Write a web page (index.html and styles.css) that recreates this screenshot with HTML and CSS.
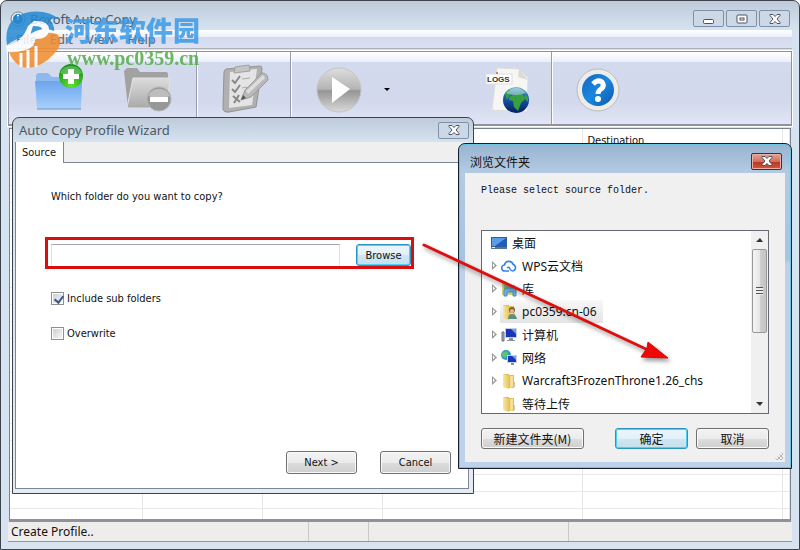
FILE: index.html
```html
<!DOCTYPE html>
<html lang="zh-CN">

<head>
    <meta charset="UTF-8">
    <meta name="viewport" content="width=device-width, initial-scale=1.0">
    <title>Boxoft Auto Copy</title>
    <link rel="stylesheet" href="styles.css">
</head>

<body>
    <svg width="0" height="0" class="defs" aria-hidden="true">
        <defs>
            <linearGradient id="blueFolder" x1="0" y1="0" x2="0" y2="1">
                <stop offset="0" stop-color="#6aa5ee" />
                <stop offset="1" stop-color="#a9d0fb" />
            </linearGradient>
            <linearGradient id="grayFolder" x1="0" y1="0" x2="0" y2="1">
                <stop offset="0" stop-color="#dcdcdc" />
                <stop offset="1" stop-color="#a9a9a9" />
            </linearGradient>
            <radialGradient id="greenBall" cx=".5" cy=".9" r=".9">
                <stop offset="0" stop-color="#5fe02f" />
                <stop offset="1" stop-color="#0b8f10" />
            </radialGradient>
            <linearGradient id="grayBall" x1="0" y1="0" x2="0" y2="1">
                <stop offset="0" stop-color="#dedede" />
                <stop offset=".48" stop-color="#b4b4b4" />
                <stop offset=".52" stop-color="#959595" />
                <stop offset="1" stop-color="#dadada" />
            </linearGradient>
            <linearGradient id="blueBall" x1="0" y1="0" x2="1" y2="1">
                <stop offset="0" stop-color="#1268bd" />
                <stop offset=".5" stop-color="#1b86e0" />
                <stop offset="1" stop-color="#0b57a8" />
            </linearGradient>
            <linearGradient id="globe" x1="0" y1="0" x2="0" y2="1">
                <stop offset="0" stop-color="#7cc0c8" />
                <stop offset=".35" stop-color="#1c5fb0" />
                <stop offset="1" stop-color="#04205f" />
            </linearGradient>
            <linearGradient id="yellowFolder" x1="0" y1="0" x2="1" y2="0">
                <stop offset="0" stop-color="#f9e9a6" />
                <stop offset="1" stop-color="#e6c55c" />
            </linearGradient>
            <symbol id="folder" viewBox="0 0 16 16">
                <path d="M2 1h6v13H2z" fill="#e2bf56" />
                <path d="M8 2h5v13H8z" fill="#dfbe5a" />
                <path d="M2 1l6 2v13l-6-2z" fill="url(#yellowFolder)" />
                <path d="M9 3h3v11l-3 1z" fill="#f5df92" />
                <path d="M13 9h1v5h-1z" fill="#c8c8b8" />
            </symbol>
            <symbol id="cross" viewBox="0 0 12 10">
                <path d="M1 .5h3l2 2 2-2h3v1L8 5l3 3.500v1H8l-2-2-2 2H1v-1L4 5 1 1.500z" fill="#fff" stroke="#4a5261" />
            </symbol>
        </defs>
    </svg>

    <main class="app">
        <header class="app-title">
            <svg class="app-icon" viewBox="0 0 16 16">
                <circle cx="8" cy="8" r="7" fill="#e8eef4" stroke="#77838f" />
                <circle cx="8" cy="8" r="5" fill="#2a7fc4" />
                <path d="M8 4v5" stroke="#fff" stroke-width="2" />
            </svg>
            <h1>Boxoft Auto Copy</h1>
            <div class="window-buttons">
                <button type="button" aria-label="Minimize"><svg viewBox="0 0 12 10"><rect x=".5" y="5.500" width="10" height="4" rx="1" fill="#fff" stroke="#4a5261" /></svg></button>
                <button type="button" aria-label="Maximize"><svg viewBox="0 0 12 10"><rect x="1" y="1" width="10" height="8" rx="1" fill="#fff" stroke="#4a5261" /><rect x="4" y="4" width="4" height="2" fill="#fff" stroke="#4a5261" /></svg></button>
                <button type="button" aria-label="Close"><svg><use href="#cross" /></svg></button>
            </div>
        </header>

        <nav class="menu">
            <a href="#">File</a>
            <a href="#">Edit</a>
            <a href="#">View</a>
            <a href="#">Help</a>
        </nav>

        <div class="toolbar">
            <div class="group group-profile">
                <button type="button" aria-label="New profile">
                    <svg viewBox="0 0 48 54">
                        <path d="M1 14q0-3 3-3h9l4 4h24q3 0 3 3v8H1z" fill="#8fb9ec" />
                        <path d="M0 19h47l-1 28H2z" fill="url(#blueFolder)" />
                        <path d="M2 47h44" stroke="#6b94c9" />
                        <circle cx="36" cy="14" r="12" fill="url(#greenBall)" />
                        <path d="M25 11a12 12 0 0 1 22 0q-11 5-22 0z" fill="#fff" opacity=".25" />
                        <path d="M33 7h6v5h5v5h-5v5h-6v-5h-5v-5h5z" fill="#fff" />
                    </svg>
                </button>
                <button type="button" aria-label="Delete profile">
                    <svg viewBox="0 0 48 54">
                        <path d="M0 9l3-3h10l3 4h26q2 0 2 3v10L4 46z" fill="#a2a2a2" />
                        <path d="M9 16h35q2 0 2 3l-4 27H3z" fill="url(#grayFolder)" stroke="#e3e3e3" />
                        <circle cx="35" cy="37" r="12" fill="#979797" stroke="#b5b5b5" />
                        <path d="M24 34a12 12 0 0 1 22 0q-11 4-22 0z" fill="#bdbdbd" />
                        <path d="M26 35h18v5H26z" fill="#fff" />
                    </svg>
                </button>
            </div>
            <div class="group group-edit">
                <button type="button" aria-label="Edit profile">
                    <svg viewBox="0 0 48 54">
                        <path d="M5 7l34-3q2 0 2 3l-6 38-27 5q-7 1-6-6L3 10q0-2 2-3z" fill="#b0b0b0" stroke="#939393" />
                        <path d="M9 10l27-3-5 36-23 3z" fill="#e4e4e4" />
                        <path d="M14 5l14-2 1 6-16 2z" fill="#c4c4c4" stroke="#a0a0a0" />
                        <path d="M11 18l3 3 5-7M11 27l3 3 5-7M12 34l7 6M18 33l-5 8" fill="none" stroke="#888" stroke-width="2" />
                        <path d="M21 17l8-1M21 26l5-1" stroke="#aaa" />
                        <path d="M20 38l4-10 17-17q6 0 6 7L30 35z" fill="#b9b9b9" stroke="#999" />
                        <path d="M25 29L42 13l2 3-17 16z" fill="#ddd" />
                        <path d="M20 38l2-5 3 3z" fill="#555" />
                    </svg>
                </button>
            </div>
            <div class="group group-run">
                <button type="button" aria-label="Run">
                    <svg viewBox="0 0 48 54">
                        <circle cx="24" cy="28" r="22" fill="url(#grayBall)" stroke="#c3c3c3" />
                        <path d="M17 15l18 12-18 14z" fill="#fff" />
                    </svg>
                </button>
                <button type="button" class="drop" aria-label="Run options">
                    <svg viewBox="0 0 8 5"><path d="M1 1h6L4 4z" fill="#000" /></svg>
                </button>
                <button type="button" class="logs" aria-label="Logs">
                    <svg viewBox="0 0 48 54">
                        <path d="M12 6l22 1 9 9-1 34-35-2z" fill="#f6f6f4" stroke="#ddd" />
                        <path d="M34 7l-1 8 10 3z" fill="#ded8d2" />
                        <rect x="1" y="12" width="26" height="10" fill="#fff" stroke="#ddd" />
                        <text x="2" y="20" class="logs-text">LOGS</text>
                        <circle cx="12" cy="11" r="1" fill="#e65c20" />
                        <circle cx="31" cy="38" r="13" fill="url(#globe)" />
                        <path d="M24 35l6-3h7l4 4-5 5-3 8-4-4-1-6-4-1zM20 32l4-4 2 3-4 7zM40 31l3 4v5l-3-3z" fill="#36a040" />
                        <path d="M21 31q10-10 20 0-10 4-20 0z" fill="#d8f1ee" opacity=".45" />
                    </svg>
                </button>
            </div>
            <div class="group">
                <button type="button" aria-label="Help">
                    <svg viewBox="0 0 48 54">
                        <circle cx="22" cy="28" r="21" fill="#ececea" stroke="#bcbcbc" />
                        <circle cx="22" cy="28" r="16" fill="url(#blueBall)" />
                        <path d="M17 22q5-5 9-2 3 4-1 7-3 2-3 5" fill="none" stroke="#fff" stroke-width="5" />
                        <circle cx="22" cy="37" r="3" fill="#fff" />
                    </svg>
                </button>
            </div>
        </div>

        <div class="list">
            <table>
                <colgroup>
                    <col class="col-name">
                    <col class="col-small">
                    <col class="col-small">
                    <col class="col-source">
                    <col class="col-source">
                    <col>
                </colgroup>
                <thead>
                    <tr><th></th><th></th><th></th><th></th><th>Destination</th><th></th></tr>
                </thead>
                <tbody>
                    <tr><td></td><td></td><td></td><td></td><td></td><td></td></tr>
                </tbody>
            </table>
        </div>

        <footer class="status">
            <span class="status-main">Create Profile..</span>
            <span class="status-small"></span>
            <span class="status-mid"></span>
            <span></span>
        </footer>
    </main>

    <section class="wizard">
        <header class="wizard-title">
            <h2>Auto Copy Profile Wizard</h2>
            <div class="window-buttons">
                <button type="button" aria-label="Close"><svg><use href="#cross" /></svg></button>
            </div>
        </header>
        <div class="wizard-body">
            <div class="tabs"><button type="button" class="tab">Source</button></div>
            <form class="page">
                <label for="source">Which folder do you want to copy?</label>
                <div class="source-row">
                    <input type="text" id="source">
                    <button type="button" class="btn btn-active">Browse</button>
                </div>
                <label class="check"><input type="checkbox" checked>Include sub folders</label>
                <label class="check"><input type="checkbox">Overwrite</label>
                <div class="page-buttons">
                    <button type="button" class="btn">Next &gt;</button>
                    <button type="button" class="btn">Cancel</button>
                </div>
            </form>
        </div>
    </section>

    <section class="dialog">
        <header class="dialog-title">
            <h2>浏览文件夹</h2>
            <button type="button" class="close-red" aria-label="Close"><svg><use href="#cross" /></svg></button>
        </header>
        <div class="dialog-body">
            <p>Please select source folder.</p>
            <div class="tree">
                <ul>
                    <li class="root">
                        <svg viewBox="0 0 16 16"><path d="M0 2h16v12H0z" fill="#2d5f9f" /><path d="M1 3h14v8H1z" fill="#1c5fc4" /><path d="M1 3h14L4 11H1z" fill="#5b9be8" /><path d="M0 12h16v2H0z" fill="#5d7690" /><path d="M1 12h3v1H1z" fill="#dff" /></svg>
                        <span>桌面</span>
                    </li>
                    <li class="parent">
                        <svg viewBox="0 0 16 16"><path d="M8 13H4a3 3 0 0 1-.5-6 4.500 4.500 0 0 1 8.700-.5A3.400 3.400 0 0 1 12 13q-2 0-3-2-1-3-3-1" fill="none" stroke="#3583e6" stroke-width="1.600" /></svg>
                        <span>WPS云文档</span>
                    </li>
                    <li class="parent">
                        <svg viewBox="0 0 16 16"><path d="M1 2h6l1 2h6v10H1z" fill="#d5cf7c" /><path d="M3 4h10v6H3z" fill="#76b788" /><path d="M3 15V9l2-2h8l2 2v6h-3v-4H6v4z" fill="#6db4de" stroke="#4a8fb9" /></svg>
                        <span>库</span>
                    </li>
                    <li class="parent selected">
                        <svg viewBox="0 0 16 16"><use href="#folder" /><circle cx="11" cy="6" r="3" fill="#8a5a3c" /><circle cx="11" cy="7" r="2" fill="#e8b48e" /><path d="M7 15q0-5 4-5t5 5z" fill="#5e8f78" /></svg>
                        <span>pc0359.cn-06</span>
                    </li>
                    <li class="parent">
                        <svg viewBox="0 0 16 16"><path d="M1 5h2v9H1z" fill="#a9b2bc" stroke="#66707a" /><path d="M4 1h12v10H4z" fill="#c8d0dc" /><path d="M5 2h10v8H5z" fill="#1834ba" /><path d="M10 2h5v5z" fill="#6e9df2" /><path d="M8 11h4v2h2v1H6v-1h2z" fill="#8692a0" /></svg>
                        <span>计算机</span>
                    </li>
                    <li class="parent">
                        <svg viewBox="0 0 16 16"><circle cx="5" cy="5" r="5" fill="#2b9cc4" /><path d="M1 3l5-2 1 3-3 4-3-2z" fill="#64c36a" /><path d="M6 5h10v8H6z" fill="#c8d0dc" /><path d="M7 6h8v6H7z" fill="#1834ba" /><path d="M11 6h4v4z" fill="#6e9df2" /><path d="M10 13h3v2h-3z" fill="#8692a0" /></svg>
                        <span>网络</span>
                    </li>
                    <li class="parent">
                        <svg viewBox="0 0 16 16"><use href="#folder" /></svg>
                        <span>Warcraft3FrozenThrone1.26_chs</span>
                    </li>
                    <li>
                        <svg viewBox="0 0 16 16"><use href="#folder" /></svg>
                        <span>等待上传</span>
                    </li>
                </ul>
                <div class="scrollbar">
                    <svg viewBox="0 0 8 4"><path d="M0 4h7L4 0z" fill="#333" /></svg>
                    <div class="thumb"></div>
                    <svg viewBox="0 0 8 4"><path d="M0 0h7L4 4z" fill="#333" /></svg>
                </div>
            </div>
            <div class="dialog-buttons">
                <button type="button" class="btn btn-new">新建文件夹(M)</button>
                <button type="button" class="btn btn-active">确定</button>
                <button type="button" class="btn">取消</button>
            </div>
            <span class="grip"></span>
        </div>
    </section>

    <svg class="arrow" viewBox="0 0 260 130">
        <path d="M6 7L230 112" stroke="#dc1010" stroke-width="3" stroke-linecap="round" />
        <path d="M250 120l-20-16-1 6-6 9z" fill="#f00808" stroke="#c80d0d" />
    </svg>

    <div class="watermark">
        <svg viewBox="0 0 60 60">
            <path d="M2 37Q-2 12 20 5q20-5 36 7-8-3-12 0 6 5 5 11-10-5-22 2Q8 32 2 37z" fill="#2589d2" />
            <path d="M4 44q16 0 26-10l2-7q10-4 20-1 8 8-3 20-12 13-26 14Q10 59 4 44z" fill="#f18b2c" />
            <path d="M1 38q16-3 22-20l6-5q14-1 15 8 0 10-13 10l-3 7q-8 7-26 6zM28 18l-3 9q10 0 12-6 0-3-9-3z" fill="#fff" fill-rule="evenodd" />
            <path d="M16 45v14M23 42v18M31 38v21" stroke="#fff" stroke-width="3" />
        </svg>
        <div class="watermark-text">
            <strong>河东软件园</strong>
            <span>www.pc0359.cn</span>
        </div>
    </div>
</body>

</html>
```
FILE: styles.css
```css
* {
    box-sizing: border-box;
}

body {
    margin: 0;
    background: #fff;
    color: #111;
    font-family: 'DejaVu Sans Condensed', 'Noto Sans', 'Noto Sans CJK SC', sans-serif;
    font-size: 11px;
}

h1, h2, p, ul {
    margin: 0;
    padding: 0;
    font-weight: normal;
}

button {
    padding: 0;
    border: none;
    background: none;
    color: #111;
    font: inherit;
}

.defs {
    position: absolute;
}

/* Main window */
.app {
    display: flex;
    flex-direction: column;
    height: 100vh;
    padding: 0 7px 7px;
    border: 1px solid #3d434d;
    border-radius: 7px 7px 0 0;
    background: linear-gradient(#bfcbd9, #d6e3f0 30px, #d7e3f1);
}

.app-title {
    display: flex;
    align-items: center;
    height: 29px;
    padding: 6px 2px 0;
    flex: none;
}

.app-title h1 {
    flex: 1;
    margin-left: 4px;
    color: #4b5866;
    font: 13px 'Noto Sans', sans-serif;
}

.app-icon {
    width: 16px;
    height: 16px;
}

.window-buttons {
    display: flex;
    gap: 2px;
}

.window-buttons button {
    display: flex;
    align-items: center;
    justify-content: center;
    width: 31px;
    height: 17px;
    border: 1px solid #8090aa;
    border-radius: 2px;
    background: #ccd8e5;
}

.window-buttons svg,
.close-red svg {
    width: 12px;
    height: 10px;
}

.menu {
    display: flex;
    flex: none;
    align-items: center;
    gap: 13px;
    height: 19px;
    padding: 0 8px;
    border-bottom: 1px solid #aab0bd;
    background: linear-gradient(#fff, #eceff9 7px, #d4daed 7px, #dce0f3);
}

.menu a {
    color: #5f646d;
    font: 13px 'Noto Sans', sans-serif;
    text-decoration: none;
}

.toolbar {
    display: flex;
    flex: none;
    height: 75px;
    margin-top: 2px;
    border: 1px solid #8e939d;
    border-width: 1px 1px 2px;
    background: linear-gradient(#fff, #eceff9 10px, #d4daed 10px, #d3d9ec 50px, #e0e4f6);
    outline: 1px solid #fff;
}

.group {
    display: flex;
    align-items: center;
    gap: 41px;
    padding: 2px 24px 0 26px;
}

.group + .group {
    padding-left: 24px;
    border-left: 1px solid #979ca6;
    box-shadow: inset 1px 0 #fff;
}

.group-edit.group {
    padding-right: 21px;
}

.group-run.group {
    gap: 20px;
    padding-right: 18px;
}

.group button,
.group svg {
    display: block;
    width: 48px;
    height: 54px;
}

.group .drop,
.group .drop svg {
    width: 8px;
    height: 5px;
}

.group .logs {
    margin-left: 74px;
}

.logs-text {
    fill: #333;
    font: bold 8px 'Liberation Sans', sans-serif;
}

.list {
    flex: 1;
    min-height: 0;
    margin: 2px 1px 0;
    border: 1px solid #7c828d;
    border-bottom: 3px solid #8f9299;
    background: #fff;
}

.list table {
    width: 100%;
    height: 100%;
    border-collapse: collapse;
    table-layout: fixed;
}

.col-name {
    width: 132px;
}

.col-small {
    width: 120px;
}

.col-source {
    width: 200px;
}

.list th,
.list td {
    padding: 0 5px;
    border-right: 1px solid #e6e6e8;
    font-weight: normal;
    text-align: left;
}

.list th {
    height: 23px;
}

.list tbody {
    background: repeating-linear-gradient(#fff 0, #fff 16px, #e9e9eb 16px, #e9e9eb 17px);
}

.status {
    display: flex;
    flex: none;
    height: 20px;
    border-bottom: 1px solid #9097a2;
    background: #efedec;
    font: 12px/20px 'Noto Sans', sans-serif;
}

.status span {
    padding-left: 3px;
    border-right: 1px solid #c9c9c9;
}

.status span:last-child {
    flex: 1;
    border: none;
}

.status-main {
    width: 301px;
}

.status-small {
    width: 60px;
}

.status-mid {
    width: 200px;
}

/* Shared buttons */
.btn {
    height: 23px;
    border: 1px solid #707070;
    border-radius: 3px;
    background: linear-gradient(#f3f3f3, #ebebeb 50%, #dddddd 50%, #cfcfcf);
    box-shadow: inset 0 0 0 1px #f8f8f8;
}

.btn-active {
    border-color: #2c93c3;
    background: linear-gradient(#edf7fc, #e2f0f8 50%, #cfe6f3 50%, #c5dfed);
    box-shadow: inset 0 0 0 1px #4cd0f8;
}

/* Profile wizard */
.wizard {
    position: absolute;
    left: 12px;
    top: 117px;
    display: flex;
    flex-direction: column;
    width: 462px;
    height: 377px;
    padding: 0 4px 4px 2px;
    border: 1px solid #3d434d;
    border-radius: 7px 7px 0 0;
    background: linear-gradient(#bfcbd9, #d6e3f0 25px, #e6ebf2);
}

.wizard-title {
    display: flex;
    align-items: center;
    justify-content: space-between;
    height: 24px;
    padding: 0 0 0 4px;
}

.wizard-title h2 {
    color: #4b5866;
    font: 13px 'Noto Sans', sans-serif;
}

.wizard-body {
    display: flex;
    flex: 1;
    flex-direction: column;
    background: #efefef;
}

.tabs {
    height: 20px;
}

.tab {
    position: relative;
    height: 21px;
    padding: 0 7px 0 6px;
    border: 1px solid #7b8697;
    border-width: 0 1px;
    background: #fff;
}

.page {
    display: flex;
    flex: 1;
    flex-direction: column;
    align-items: flex-start;
    padding: 27px 17px 14px 35px;
    border: 1px solid #7b8697;
    background: #fff;
}

.source-row {
    display: flex;
    justify-content: space-between;
    width: 369px;
    height: 32px;
    margin: 34px 0 22px -6px;
    padding: 4px 0 0 3px;
    border: 3px solid #dc0d0d;
}

.source-row input {
    width: 289px;
    height: 22px;
    border: 1px solid #dfe3e8;
    border-top-color: #9fa6b0;
    border-bottom: none;
}

.source-row .btn {
    width: 55px;
    height: 22px;
}

.check {
    display: flex;
    align-items: center;
    gap: 3px;
    height: 15px;
    margin-bottom: 20px;
}

.check input {
    width: 13px;
    height: 13px;
    margin: 0;
    border: 1px solid #8e8f8f;
    background: linear-gradient(135deg, #cdd1d6, #f5f5f5) content-box;
    padding: 1px;
    appearance: none;
}

.check input:checked::after {
    content: '';
    display: block;
    width: 4px;
    height: 7px;
    margin-left: 3px;
    border: solid #3e5592;
    border-width: 0 2px 2px 0;
    transform: rotate(38deg);
}

.page-buttons {
    display: flex;
    align-self: flex-end;
    gap: 23px;
    margin-top: auto;
}

.page-buttons .btn {
    width: 71px;
}

/* Folder dialog */
.dialog {
    position: absolute;
    left: 458px;
    top: 143px;
    display: flex;
    flex-direction: column;
    width: 334px;
    height: 326px;
    padding: 0 6px 6px;
    border: 1px solid #15202c;
    border-radius: 7px 7px 0 0;
    background: linear-gradient(#98b4d1, #b3cae2 28px, #a5c4e4 115px, #bdd2ea 120px);
    box-shadow: inset 0 0 0 1px #6fc6e2;
}

.dialog-title {
    display: flex;
    align-items: center;
    justify-content: space-between;
    height: 29px;
    padding: 5px 3px 0 5px;
}

.dialog-title h2 {
    font: 12px 'Noto Sans CJK SC', sans-serif;
}

.close-red {
    display: flex;
    align-items: center;
    justify-content: center;
    width: 31px;
    height: 17px;
    border: 1px solid #5b2230;
    border-radius: 2px;
    background: linear-gradient(#e5a596, #cf6f5b 50%, #b93320 50%, #cf5a40);
    box-shadow: inset 0 0 0 1px #e8b0a4;
}

.dialog-body {
    position: relative;
    display: flex;
    flex: 1;
    flex-direction: column;
    padding: 12px 16px;
    background: #f0f0f0;
}

.dialog-body p {
    height: 45px;
    font: 10px 'Liberation Mono', monospace;
}

.tree {
    display: flex;
    height: 184px;
    border: 1px solid #646a70;
    background: #fff;
}

.tree ul {
    flex: 1;
    overflow: hidden;
    list-style: none;
    font: 12px 'Noto Sans', 'Noto Sans CJK SC', sans-serif;
}

.tree li {
    display: flex;
    align-items: center;
    gap: 5px;
    height: 23px;
    padding-left: 19px;
}

.tree .root {
    padding-left: 9px;
}

.tree .parent {
    padding-left: 10px;
}

.parent::before {
    content: '';
    width: 5px;
    height: 9px;
    margin-right: -1px;
    background: #999;
    clip-path: polygon(0 0, 100% 50%, 0 100%, 0 80%, 20% 70%, 60% 50%, 20% 25%, 20% 70%, 0 80%);
}

.tree li svg {
    width: 16px;
    height: 16px;
    flex: none;
}

.tree .selected {
    width: 121px;
    padding-left: 18px;
    background: linear-gradient(#f8f8f8, #e4e4e4) content-box;
}

.selected::before {
    margin-left: -8px;
}

.scrollbar {
    display: flex;
    flex-direction: column;
    align-items: center;
    width: 17px;
    padding: 7px 1px;
    background: #f0f0f0;
}

.scrollbar svg {
    width: 8px;
    height: 4px;
}

.thumb {
    display: flex;
    align-items: center;
    justify-content: center;
    width: 15px;
    height: 84px;
    margin: 7px 0 auto;
    border: 1px solid #989898;
    border-radius: 2px;
    background: linear-gradient(90deg, #f5f5f5, #e6e6e6 50%, #d0d0d0 50%, #c4c4c4);
}

.thumb::before {
    content: '';
    width: 7px;
    height: 8px;
    background: repeating-linear-gradient(#555 0, #555 1px, #eee 1px, #eee 3px);
}

.dialog-buttons {
    display: flex;
    gap: 8px;
    margin-top: 14px;
    font: 12px 'Noto Sans CJK SC', sans-serif;
}

.dialog-buttons .btn {
    width: 73px;
    height: 21px;
}

.dialog-buttons .btn-new {
    width: 103px;
    margin-right: auto;
}

.grip {
    position: absolute;
    right: 2px;
    bottom: 2px;
    width: 9px;
    height: 9px;
    background: repeating-conic-gradient(#b5b5b5 0 25%, #f0f0f0 0 50%) 0 0 / 4px 4px;
    clip-path: polygon(100% 0, 100% 100%, 0 100%);
}

/* Overlays */
.arrow {
    position: absolute;
    left: 418px;
    top: 238px;
    width: 260px;
    height: 130px;
    fill: none;
    filter: drop-shadow(2px 3px 2px rgba(0, 0, 0, 0.4));
    pointer-events: none;
}

.watermark {
    position: absolute;
    left: 5px;
    top: 8px;
    display: flex;
    opacity: 0.85;
    pointer-events: none;
}

.watermark > svg {
    width: 60px;
    height: 60px;
}

.watermark-text {
    display: flex;
    flex-direction: column;
    padding-top: 6px;
}

.watermark strong {
    color: #3a9ae6;
    font: 900 27px/32px 'Noto Sans CJK SC', sans-serif;
}

.watermark span {
    padding-left: 2px;
    color: #55ac48;
    font: bold 20px/24px 'Liberation Serif', serif;
}
```
